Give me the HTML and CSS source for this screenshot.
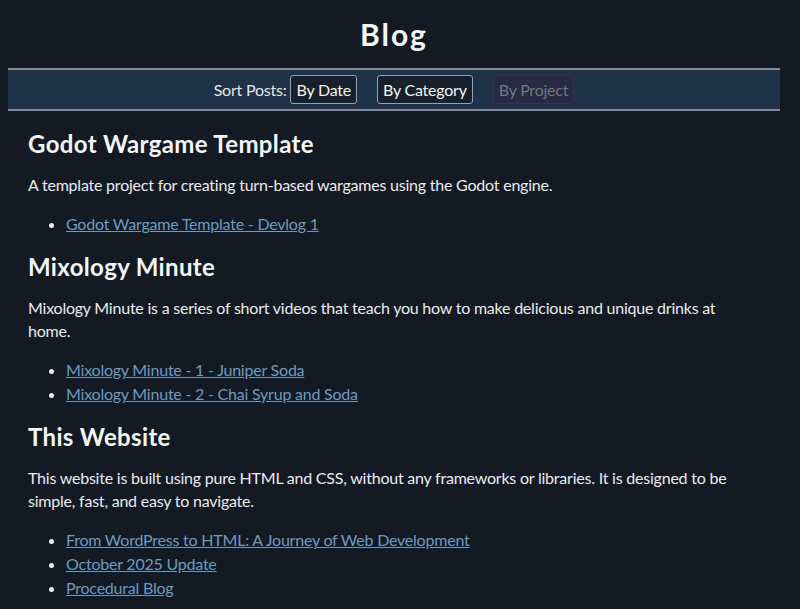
FILE: index.html
```html
<!DOCTYPE html>
<html lang="en">
<head>
<meta charset="utf-8">
<title>Blog</title>
<link rel="stylesheet" href="styles.css">
</head>
<body>
<div class="page">
  <h1 class="title">Blog</h1>
  <nav class="sortbar">
    <span class="sort-label">Sort Posts:</span>
    <button class="sort-btn">By Date</button>
    <button class="sort-btn">By Category</button>
    <button class="sort-btn is-active">By Project</button>
  </nav>
  <main class="content">
    <section class="project">
      <h2>Godot Wargame Template</h2>
      <p>A template project for creating turn-based wargames using the Godot engine.</p>
      <ul>
        <li><a href="#">Godot Wargame Template - Devlog 1</a></li>
      </ul>
    </section>
    <section class="project">
      <h2>Mixology Minute</h2>
      <p>Mixology Minute is a series of short videos that teach you how to make delicious and unique drinks at home.</p>
      <ul>
        <li><a href="#">Mixology Minute - 1 - Juniper Soda</a></li>
        <li><a href="#">Mixology Minute - 2 - Chai Syrup and Soda</a></li>
      </ul>
    </section>
    <section class="project">
      <h2>This Website</h2>
      <p>This website is built using pure HTML and CSS, without any frameworks or libraries. It is designed to be simple, fast, and easy to navigate.</p>
      <ul>
        <li><a href="#">From WordPress to HTML: A Journey of Web Development</a></li>
        <li><a href="#">October 2025 Update</a></li>
        <li><a href="#">Procedural Blog</a></li>
      </ul>
    </section>
  </main>
</div>
</body>
</html>
```
FILE: styles.css
```css
html, body {
  margin: 0;
  background: #131a23;
}
body {
  color: #e9ecef;
  font-family: Lato, "Open Sans", "Noto Sans", sans-serif;
  font-size: 16px;
  letter-spacing: -0.22px;
  overflow: hidden;
}
.page {
  padding: 16px 20px 0 8px;
}
.title {
  margin: 0 0 16px;
  font-size: 30px;
  line-height: 36px;
  font-weight: 700;
  letter-spacing: 2px;
  text-align: center;
  color: #f4f6f8;
}
.sortbar {
  display: flex;
  align-items: center;
  justify-content: center;
  height: 39px;
  background: #1f3247;
  border-top: 2px solid #7f8a95;
  border-bottom: 2px solid #7f8a95;
}
.sort-label {
  margin-right: 4px;
  color: #e4e8ec;
}
.sort-btn {
  font: inherit;
  letter-spacing: inherit;
  line-height: 21px;
  padding: 3px 5px;
  margin-right: 20px;
  color: #f2f4f6;
  background: #17202b;
  border: 1px solid #8ea3b5;
  border-radius: 3px;
}
.sort-btn:last-child {
  margin-right: 0;
}
.sort-btn.is-active {
  color: #74777e;
  background: #262a43;
  border-color: #2e3350;
}
.content {
  padding: 2px 20px 0;
}
.project h2 {
  margin: 16px 0 14px;
  font-size: 24px;
  line-height: 30px;
  font-weight: 700;
  letter-spacing: 0.35px;
  color: #f4f6f8;
}
.project p {
  margin: 0 0 16px;
  line-height: 23px;
}
.project ul {
  margin: 0;
  padding-left: 38px;
  line-height: 24px;
}
.project a {
  color: #6e9abf;
}
```
